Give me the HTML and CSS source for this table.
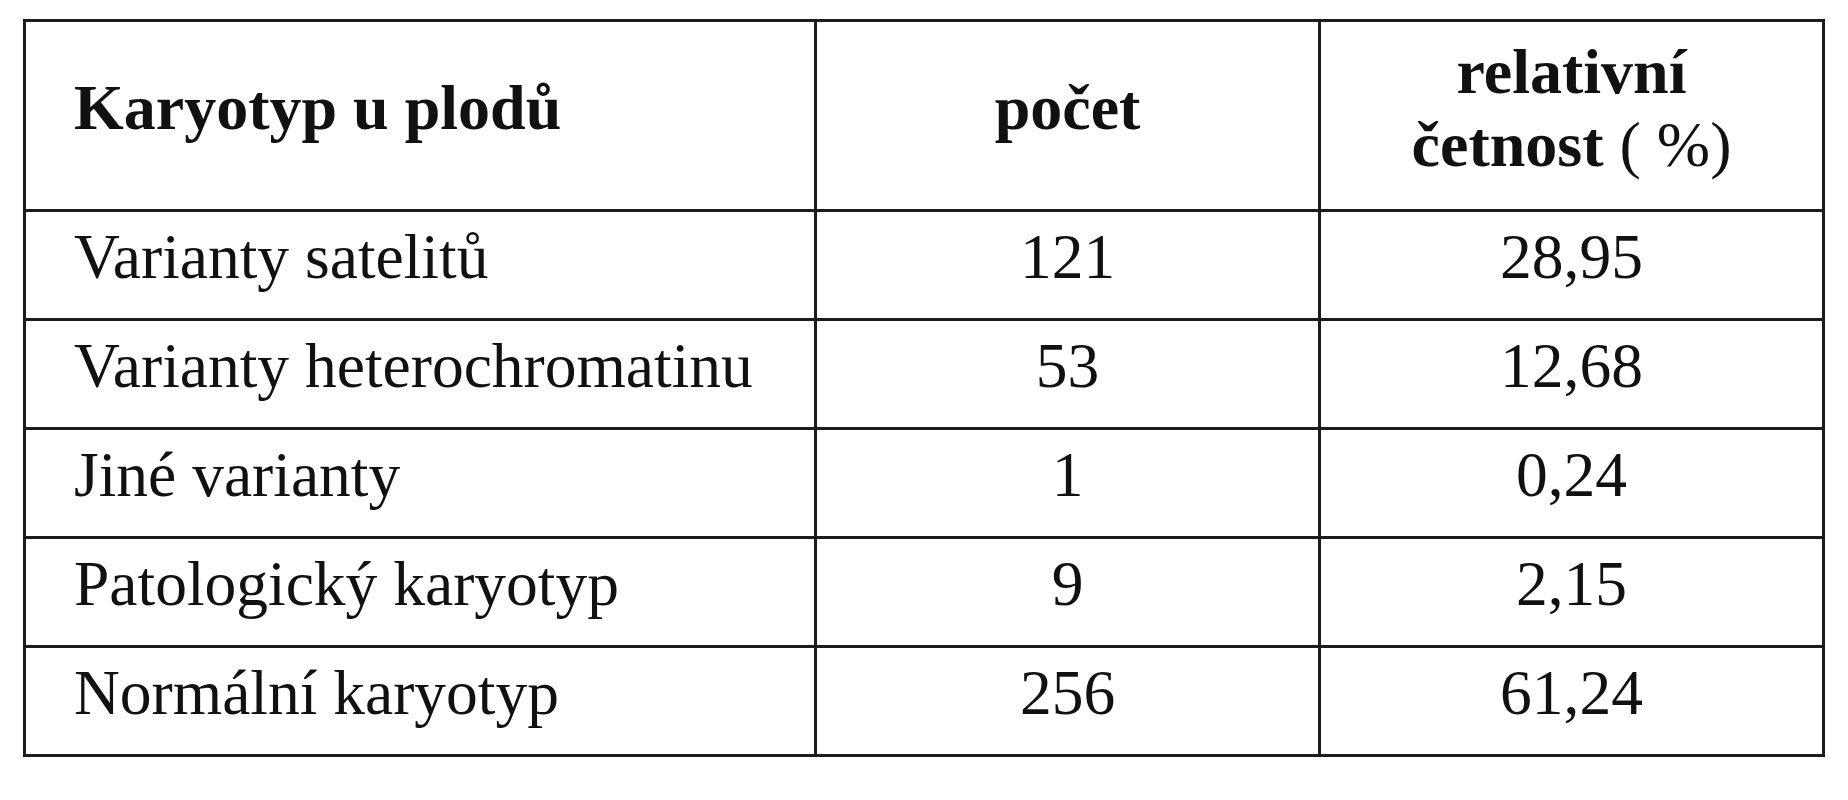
FILE: index.html
```html
<!DOCTYPE html>
<html lang="cs">
<head>
<meta charset="utf-8">
<title>Karyotyp u plodů</title>
<link rel="stylesheet" href="styles.css">
</head>
<body>
<table class="data">
  <colgroup>
    <col class="c1">
    <col class="c2">
    <col class="c3">
  </colgroup>
  <thead>
    <tr class="head">
      <th class="label">Karyotyp u plodů</th>
      <th class="num">počet</th>
      <th class="num">relativní<br>četnost <span class="reg">(&nbsp;%)</span></th>
    </tr>
  </thead>
  <tbody>
    <tr><td class="label">Varianty satelitů</td><td class="num">121</td><td class="num">28,95</td></tr>
    <tr><td class="label">Varianty heterochromatinu</td><td class="num">53</td><td class="num">12,68</td></tr>
    <tr><td class="label">Jiné varianty</td><td class="num">1</td><td class="num">0,24</td></tr>
    <tr><td class="label">Patologický karyotyp</td><td class="num">9</td><td class="num">2,15</td></tr>
    <tr><td class="label">Normální karyotyp</td><td class="num">256</td><td class="num">61,24</td></tr>
  </tbody>
</table>
</body>
</html>
```

FILE: styles.css
```css
html, body {
  margin: 0;
  padding: 0;
  background: #ffffff;
}

body {
  width: 1848px;
  height: 800px;
  overflow: hidden;
  font-family: "Liberation Serif", "Times New Roman", serif;
  color: #111111;
}

.data {
  margin: 19px 0 0 23px;
  border-collapse: separate;
  border-spacing: 0;
  table-layout: fixed;
  width: 1802px;
  border-top: 3px solid #1c1c1c;
  border-left: 3px solid #1c1c1c;
}

.c1 { width: 791px; }
.c2 { width: 504px; }
.c3 { width: 504px; }

.data th,
.data td {
  box-sizing: border-box;
  border-right: 3px solid #1c1c1c;
  border-bottom: 3px solid #1c1c1c;
  padding: 0 0 16px 0;
  vertical-align: middle;
  white-space: nowrap;
}

.data th {
  height: 190px;
  font-size: 64px;
  font-weight: bold;
  line-height: 73px;
}

.data td {
  height: 109px;
  font-size: 63.5px;
  font-weight: normal;
  line-height: 68px;
}

.label {
  text-align: left;
  padding-left: 48px !important;
}

.num {
  text-align: center;
}

.reg {
  font-weight: normal;
}
```
